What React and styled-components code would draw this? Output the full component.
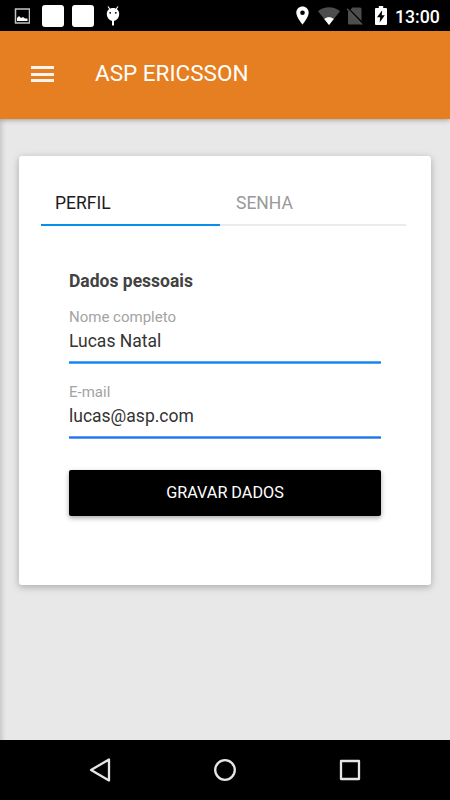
import React, { useState } from "react";
import styled, { createGlobalStyle } from "styled-components";

const GlobalStyle = createGlobalStyle`
  * {
    box-sizing: border-box;
  }
  body {
    margin: 0;
    font-family: Roboto, "Noto Sans", sans-serif;
  }
`;

const Screen = styled.div`
  width: 450px;
  height: 800px;
  display: flex;
  flex-direction: column;
  overflow: hidden;
  background-color: #e8e8e8;
`;

const StatusBar = styled.div`
  flex: none;
  height: 31px;
  padding: 0 10px 0 14px;
  display: flex;
  align-items: center;
  justify-content: space-between;
  background-color: #000;

  svg {
    display: block;
  }

  .sim {
    margin: 0 3px 0 -2px;
  }
`;

const StatusGroup = styled.div`
  display: flex;
  align-items: center;
  gap: ${(props) => props.$gap}px;
`;

const Notice = styled.div`
  width: 22px;
  height: 22px;
  border-radius: 3px;
  background-color: #fff;
`;

const Clock = styled.div`
  width: 45px;
  margin-left: -1px;
  padding-top: 2px;
  color: #fff;
  font-size: 17.7px;
  font-weight: 500;
  line-height: 22px;
  white-space: nowrap;
`;

const Header = styled.header`
  flex: none;
  height: 88px;
  padding: 0 31px 2px;
  display: flex;
  align-items: center;
  gap: 41px;
  background-color: #e67f22;
  box-shadow: 0 1px 5px rgba(0, 0, 0, 0.32);
  z-index: 1;
`;

const MenuButton = styled.button`
  width: 23px;
  height: 16px;
  padding: 0;
  border: none;
  background: none;
  display: flex;
  flex-direction: column;
  justify-content: space-between;

  > span {
    width: 100%;
    height: 3px;
    background-color: #fff4ec;
  }
`;

const Title = styled.h1`
  margin: -2px 0 0;
  color: #fff;
  font-size: 22.5px;
  font-weight: 400;
  line-height: 28px;
`;

const Content = styled.main`
  flex: 1;
  padding: 37px 19px 0;
  box-shadow: inset 6px 0 5px -4px rgba(0, 0, 0, 0.16);
`;

const Card = styled.section`
  height: 429px;
  padding: 24px 25px 0 22px;
  border-radius: 3px;
  background-color: #fff;
  box-shadow: 0 2px 6px rgba(0, 0, 0, 0.18), 0 2px 11px rgba(0, 0, 0, 0.1);
`;

const Tabs = styled.div`
  display: grid;
  grid-template-columns: 179px 1fr;
`;

const Tab = styled.button`
  height: 46px;
  padding: 2px 0 0 ${(props) => props.$indent}px;
  border: none;
  border-bottom: 2px solid ${(props) => (props.$active ? "#078eee" : "#ebebeb")};
  background: none;
  color: ${(props) => (props.$active ? "#1c1c1c" : "#999")};
  font-family: inherit;
  font-size: 17.5px;
  font-weight: 400;
  text-align: left;
`;

const Form = styled.form`
  padding: 45px 25px 0 28px;
`;

const Heading = styled.h2`
  margin: 0 0 16px;
  color: #424242;
  font-size: 17.5px;
  font-weight: 700;
  line-height: 20px;
`;

const Field = styled.label`
  display: block;
  height: 57px;
  margin-bottom: 18px;
  border-bottom: 1px solid ${(props) => props.$edge};
  box-shadow: inset 0 -1px 0 ${(props) => props.$line}, inset 0 -2px 0 ${(props) => props.$edge};
`;

const Label = styled.span`
  display: block;
  color: #a3a3a3;
  font-size: 15px;
  line-height: 20px;
`;

const Input = styled.input`
  display: block;
  width: 100%;
  height: 26px;
  padding: 1px 0 0;
  border: none;
  outline: none;
  background: none;
  color: #333;
  font-family: inherit;
  font-size: 17.5px;
`;

const SaveButton = styled.button`
  width: 100%;
  height: 46px;
  margin-top: 13px;
  padding: 0 0 2px;
  border: none;
  border-radius: 2px;
  background-color: #000;
  box-shadow: 0 2px 5px rgba(0, 0, 0, 0.35);
  color: #fff;
  font-family: inherit;
  font-size: 16.2px;
`;

const NavBar = styled.nav`
  flex: none;
  height: 60px;
  padding: 0 88px;
  display: flex;
  align-items: center;
  justify-content: space-between;
  background-color: #000;
`;

const PictureIcon = () => (
  <svg width="16" height="16" viewBox="0 0 16 16">
    <rect x="1.5" y="1" width="14" height="14" fill="none" stroke="#c4c4c4" strokeWidth="1.5" />
    <path d="M3 13V10L5 8L7 10L9 9L11 10.5H13.5V13Z" fill="#fff" />
  </svg>
);

const DroidIcon = () => (
  <svg width="14" height="20" viewBox="0 0 14 20">
    <path d="M2 0.5L4.5 4M12 0.5L9.5 4" stroke="#fff" strokeWidth="1.2" />
    <path d="M7 2C3.5 2 .8 4.3 .8 7.8C.8 12 3.7 15 7 15S13.2 12 13.2 7.8C13.2 4.3 10.5 2 7 2Z" fill="#fff" />
    <circle cx="4.2" cy="6.8" r="0.9" fill="#000" />
    <circle cx="9.8" cy="6.8" r="0.9" fill="#000" />
    <path d="M7 14V19.5" stroke="#fff" strokeWidth="2" />
  </svg>
);

const PinIcon = () => (
  <svg width="13" height="19" viewBox="0 0 13 19">
    <path
      d="M6.5 0.5C3 .5 .3 3.2 .3 6.7C.3 11.3 6.5 18.5 6.5 18.5S12.7 11.3 12.7 6.7C12.7 3.2 10 .5 6.5 .5ZM6.5 9A2.3 2.3 0 1 1 6.5 4.4A2.3 2.3 0 0 1 6.5 9Z"
      fill="#fff"
    />
  </svg>
);

const WifiIcon = () => (
  <svg width="22" height="18" viewBox="0 0 22 18">
    <path d="M11 18L0 4.2C6-1.2 16-1.2 22 4.2Z" fill="#4d4d4d" />
    <path d="M11 18L6.2 11.9C9 9.7 13 9.7 15.8 11.9Z" fill="#fff" />
  </svg>
);

const NoSimIcon = () => (
  <svg className="sim" width="16" height="18" viewBox="0 0 16 18">
    <path d="M5.5.5H13Q14.5.5 14.5 2V17.5H2Q1 17.5 1 16.5V5Z" fill="#4d4d4d" />
    <path d="M1 1.2L15.7 16.2" stroke="#000" strokeWidth="1.6" />
    <path d="M0 1.8L15 17.5" stroke="#555" strokeWidth="1.3" />
  </svg>
);

const BatteryIcon = () => (
  <svg width="12" height="19" viewBox="0 0 12 19">
    <path d="M3.8 0H8.2V2H11Q12 2 12 3V18Q12 19 11 19H1Q0 19 0 18V3Q0 2 1 2H3.8Z" fill="#fff" />
    <path d="M7.2 4.2L2 11.3H5.2L4.6 16.5L9.8 9.3H6.7Z" fill="#000" />
  </svg>
);

const NavIcon = ({ children }) => (
  <svg width="24" height="24" viewBox="0 0 24 24" fill="none" stroke="#e6e6e6" strokeWidth="2.3" strokeLinejoin="round">
    {children}
  </svg>
);

const tabs = [
  { id: "perfil", text: "PERFIL", indent: 14 },
  { id: "senha", text: "SENHA", indent: 16 },
];

const App = () => {
  const [tab, setTab] = useState("perfil");
  const [name, setName] = useState("Lucas Natal");
  const [email, setEmail] = useState("lucas@asp.com");

  return (
    <>
      <GlobalStyle />
      <Screen>
        <StatusBar>
          <StatusGroup $gap={12}>
            <PictureIcon />
            <StatusGroup $gap={8}>
              <Notice />
              <Notice />
            </StatusGroup>
            <DroidIcon />
          </StatusGroup>
          <StatusGroup $gap={9}>
            <PinIcon />
            <WifiIcon />
            <NoSimIcon />
            <BatteryIcon />
            <Clock>13:00</Clock>
          </StatusGroup>
        </StatusBar>

        <Header>
          <MenuButton aria-label="Menu">
            <span />
            <span />
            <span />
          </MenuButton>
          <Title>ASP ERICSSON</Title>
        </Header>

        <Content>
          <Card>
            <Tabs>
              {tabs.map((item) => (
                <Tab key={item.id} $active={tab === item.id} $indent={item.indent} onClick={() => setTab(item.id)}>
                  {item.text}
                </Tab>
              ))}
            </Tabs>
            <Form onSubmit={(e) => e.preventDefault()}>
              <Heading>Dados pessoais</Heading>
              <Field $line="#0784ee" $edge="#58a8f2">
                <Label>Nome completo</Label>
                <Input value={name} onChange={(e) => setName(e.target.value)} />
              </Field>
              <Field $line="#1a74e8" $edge="#62a2f2">
                <Label>E-mail</Label>
                <Input value={email} onChange={(e) => setEmail(e.target.value)} />
              </Field>
              <SaveButton>GRAVAR DADOS</SaveButton>
            </Form>
          </Card>
        </Content>

        <NavBar>
          <NavIcon>
            <path d="M21 1.5V22.5L3 12Z" />
          </NavIcon>
          <NavIcon>
            <circle cx="12" cy="12" r="9.8" />
          </NavIcon>
          <NavIcon>
            <rect x="3" y="3" width="18" height="18" />
          </NavIcon>
        </NavBar>
      </Screen>
    </>
  );
};

export default App;
